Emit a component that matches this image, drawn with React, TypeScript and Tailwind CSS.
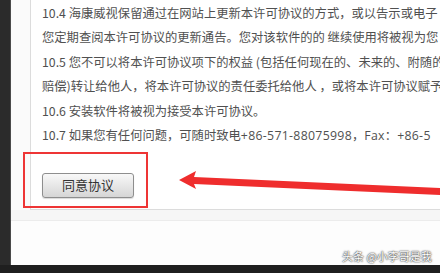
import React from "react";

const lines = [
  "10.4 海康威视保留通过在网站上更新本许可协议的方式，或以告示或电子",
  "您定期查阅本许可协议的更新通告。您对该软件的的 继续使用将被视为您",
  "10.5 您不可以将本许可协议项下的权益 (包括任何现在的、未来的、附随的",
  "赔偿)转让给他人，将本许可协议的责任委托给他人 ，或将本许可协议赋予",
  "10.6 安装软件将被视为接受本许可协议。",
];

export default function App() {
  return (
    <div
      className="relative w-[440px] h-[273px] overflow-hidden bg-[#222222] flex flex-col"
      style={{ fontFamily: '"Noto Sans CJK SC", "Noto Sans", sans-serif' }}
    >
      <div className="flex h-[265px] shrink-0">
        <div className="w-[11px] shrink-0 bg-[#2b2b2b] border-r border-[#4a4a4a]" />
        <div className="flex-1 min-w-0 bg-[#fafafa] flex flex-col">
          <div className="pl-[19px]">
            <div className="bg-white border-l border-b border-[#dcdcdc] pl-[11px] pt-[1px] pb-[11px] overflow-hidden">
              <div className="text-[12.3px] leading-[24.4px] text-[#505050] whitespace-nowrap">
                {lines.map((l, i) => (
                  <div key={i}>{l}</div>
                ))}
                <div>
                  10.7 如果您有任何问题，可随时致电
                  <span className="font-['Open_Sans'] tracking-[0.3px]">+86-571-88075998</span>
                  ，
                  <span className="font-['Open_Sans'] tracking-[0.3px]">Fax</span>
                  ：
                  <span className="font-['Open_Sans'] tracking-[0.3px]">+86-5</span>
                </div>
              </div>
              <div className="mt-[23px]">
                <button className="w-[92px] h-[25px] rounded-[3px] border border-[#8e8e8e] bg-gradient-to-b from-[#f8f8f8] to-[#d6d6d6] text-[13px] text-[#333] shadow-[0_1px_1px_rgba(0,0,0,0.15)]">
                  同意协议
                </button>
              </div>
            </div>
          </div>
          <div className="h-[11px] bg-[#f6f6f6] border-b border-[#ececec]" />
          <div className="flex-1 bg-[#fdfdfd]" />
        </div>
      </div>
      <div className="flex-1 bg-[#1f1f1f]" />

      <div className="absolute left-[23px] top-[152px] w-[125px] h-[56px] border-2 border-[#ee3535]" />

      <svg className="absolute left-0 top-0" width="440" height="273" viewBox="0 0 440 273">
        <polygon
          points="179,180 196,171 194,177 440,188 440,195 194,184 196,189"
          fill="#ef2d2d"
        />
      </svg>

      <div className="absolute left-[342px] top-[249px] text-[11px] leading-[14px] text-white whitespace-nowrap [text-shadow:0_0_1px_#333,0_0_2px_#333]">
        头条 @小李哥是我
      </div>
    </div>
  );
}
